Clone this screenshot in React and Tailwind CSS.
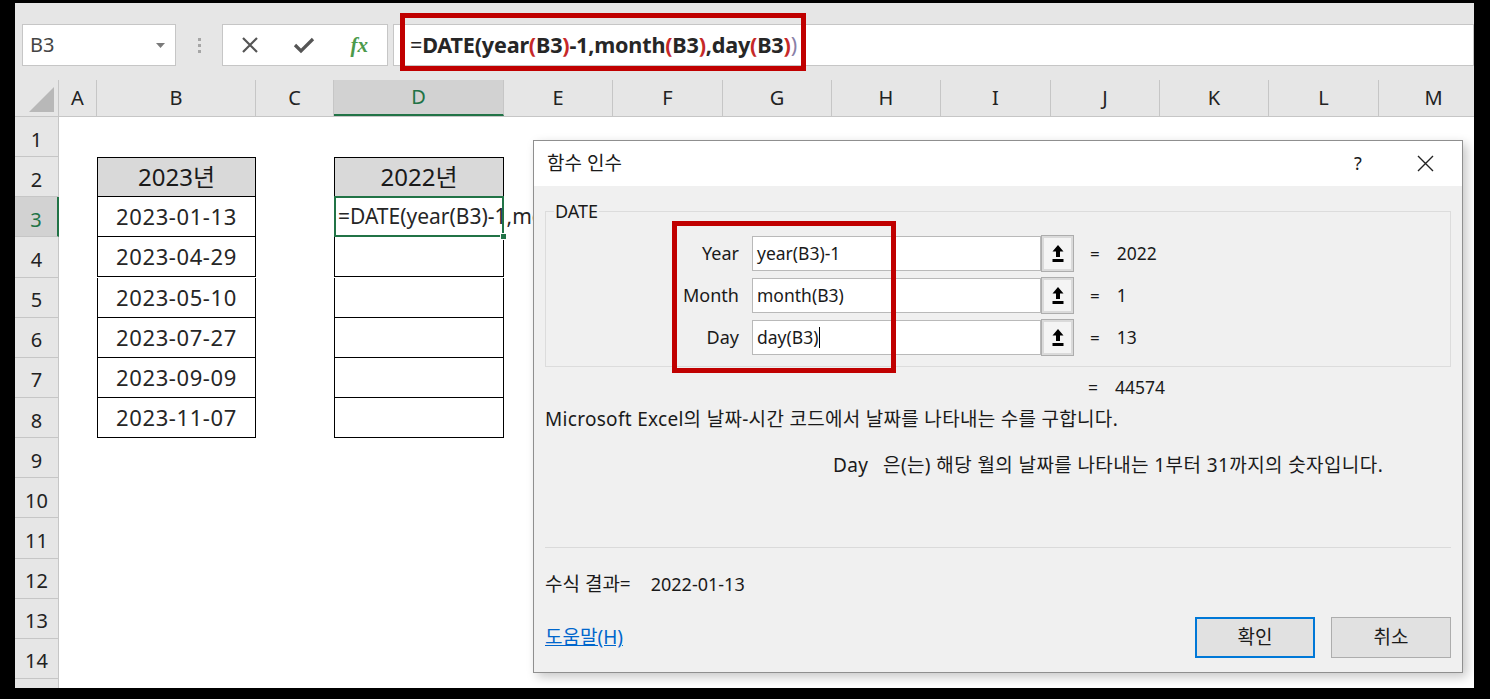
import React from "react";

const COLS = [
  { l: "A", w: "w-[38px]" },
  { l: "B", w: "w-[159px]" },
  { l: "C", w: "w-[78px]" },
  { l: "D", w: "w-[170px]" },
  { l: "E", w: "w-[109px]" },
  { l: "F", w: "w-[110px]" },
  { l: "G", w: "w-[109px]" },
  { l: "H", w: "w-[109px]" },
  { l: "I", w: "w-[110px]" },
  { l: "J", w: "w-[109px]" },
  { l: "K", w: "w-[109px]" },
  { l: "L", w: "w-[110px]" },
  { l: "M", w: "w-[110px]" },
];

const DATES = ["2023-01-13", "2023-04-29", "2023-05-10", "2023-07-27", "2023-09-09", "2023-11-07"];

function RefIcon() {
  return (
    <svg width="12" height="18" viewBox="0 0 12 18">
      <path d="M6 0 L11.5 6.5 H8 V12 H4 V6.5 H0.5 Z" fill="#000" />
      <rect x="0.5" y="14" width="11" height="3" fill="#000" />
    </svg>
  );
}

function Cell({ col, row }) {
  const base = `${col.w} h-[40px] shrink-0`;
  if (col.l === "B" && row >= 2 && row <= 8) {
    if (row === 2)
      return (
        <div className={`${base} border border-black bg-[#d9d9d9] flex items-center justify-center text-[24px] text-[#1a1a1a]`}>
          2023년
        </div>
      );
    return (
      <div className={`${base} border-x border-b border-black bg-white flex items-center justify-center text-[22px] tracking-[0.6px] text-[#262626]`}>
        {DATES[row - 3]}
      </div>
    );
  }
  if (col.l === "D" && row >= 2 && row <= 8) {
    if (row === 2)
      return (
        <div className={`${base} border border-black bg-[#d9d9d9] flex items-center justify-center text-[24px] text-[#1a1a1a]`}>
          2022년
        </div>
      );
    if (row === 3)
      return (
        <div className={`${base} relative border-x border-b border-black bg-white flex items-center pl-[3px] text-[21px] text-[#262626] whitespace-nowrap`}>
          <div className="w-[196px] shrink-0 overflow-hidden">=DATE(year(B3)-1,month(B3),day(B3))</div>
          <div className="absolute -left-[1px] -top-[1px] -right-[1px] -bottom-[1px] border-2 border-[#217346]" />
          <div className="absolute -right-[4px] -bottom-[4px] w-[7px] h-[7px] bg-[#217346] border border-white" />
        </div>
      );
    return <div className={`${base} border-x border-b border-black bg-white`} />;
  }
  return <div className={`${base} bg-white`} />;
}

export default function App() {
  const rows = Array.from({ length: 15 }, (_, i) => i + 1);
  return (
    <div className="relative w-[1490px] h-[699px] bg-black pt-[3px] pl-[15px] overflow-hidden font-['Noto_Sans','Noto_Sans_CJK_KR',sans-serif]">
      <div className="w-[1459px] h-[685px] bg-white flex flex-col overflow-hidden">
        {/* Toolbar / formula bar */}
        <div className="h-[77px] shrink-0 bg-[#e6e6e6] flex items-start pt-[21px] pl-[7px]">
          <div className="w-[154px] h-[42px] bg-white border border-[#c6c6c6] flex items-center justify-between pl-[7px] pr-[10px]">
            <span className="text-[20px] text-[#444]">B3</span>
            <svg width="9" height="5" viewBox="0 0 9 5">
              <path d="M0 0 H9 L4.5 5 Z" fill="#7a7a7a" />
            </svg>
          </div>
          <div className="w-[46px] h-[42px] flex flex-col items-center justify-center gap-[3px]">
            <div className="w-[3px] h-[3px] bg-[#a6a6a6]" />
            <div className="w-[3px] h-[3px] bg-[#a6a6a6]" />
            <div className="w-[3px] h-[3px] bg-[#a6a6a6]" />
          </div>
          <div className="w-[166px] h-[42px] bg-white border border-[#c6c6c6] flex items-center">
            <div className="w-[54px] flex justify-center">
              <svg width="18" height="18" viewBox="0 0 18 18">
                <path d="M2 2 L16 16 M16 2 L2 16" stroke="#555" strokeWidth="2.2" />
              </svg>
            </div>
            <div className="w-[56px] flex justify-center">
              <svg width="22" height="18" viewBox="0 0 22 18">
                <path d="M2 9 L8 15 L20 3" stroke="#555" strokeWidth="3.2" fill="none" />
              </svg>
            </div>
            <div className="w-[56px] flex justify-center">
              <span className="font-['Liberation_Serif',serif] italic font-bold text-[21px] text-[#4c9a4c] leading-none">fx</span>
            </div>
          </div>
          <div className="ml-[5px] flex-1 h-[42px] bg-white border border-[#c6c6c6] flex items-center pl-[16px]">
            <span className="text-[21.6px] font-bold text-[#262626] whitespace-nowrap tracking-[-0.2px]">
              <span className="font-normal">=</span>DATE(year<span className="text-[#c62828]">(</span>B3
              <span className="text-[#c62828]">)</span>-1,month<span className="text-[#c62828]">(</span>B3
              <span className="text-[#c62828]">)</span>,day<span className="text-[#c62828]">(</span>B3
              <span className="text-[#c62828]">)</span>
              <span className="text-[#8a7fa8] font-normal">)</span>
            </span>
          </div>
        </div>

        {/* Column headers */}
        <div className="h-[37px] shrink-0 flex bg-[#e6e6e6] border-b border-[#c6c6c6]">
          <div className="w-[44px] shrink-0 h-full border-r border-[#c6c6c6] flex items-end justify-end pr-[4px] pb-[4px]">
            <svg width="25" height="25" viewBox="0 0 25 25">
              <path d="M25 0 V25 H0 Z" fill="#b8b8b8" />
            </svg>
          </div>
          {COLS.map((c) =>
            c.l === "D" ? (
              <div key={c.l} className={`${c.w} shrink-0 h-full bg-[#d2d2d2] border-r border-[#c6c6c6] border-b-2 border-b-[#217346] flex items-center justify-center text-[20px] text-[#217346]`}>
                {c.l}
              </div>
            ) : (
              <div key={c.l} className={`${c.w} shrink-0 h-full border-r border-[#c6c6c6] flex items-center justify-center text-[20px] text-[#222]`}>
                {c.l}
              </div>
            )
          )}
        </div>

        {/* Rows */}
        <div className="flex flex-col">
          {rows.map((r) => (
            <div key={r} className="flex h-[40.15px] shrink-0">
              <div
                className={
                  r === 3
                    ? "w-[44px] shrink-0 h-full bg-[#d2d2d2] border-b border-[#c6c6c6] border-r-2 border-r-[#217346] flex items-center justify-center text-[20px] text-[#217346] pt-[6px]"
                    : "w-[44px] shrink-0 h-full bg-[#e6e6e6] border-b border-[#c6c6c6] border-r border-r-[#c6c6c6] flex items-center justify-center text-[20px] text-[#222] pt-[6px]"
                }
              >
                {r < 15 ? r : null}
              </div>
              {COLS.map((c) => (
                <Cell key={c.l} col={c} row={r} />
              ))}
            </div>
          ))}
        </div>
      </div>

      {/* Formula bar annotation */}
      <div className="absolute left-[400px] top-[13px] w-[406px] h-[58px] border-[5px] border-[#c00000]" />

      {/* Function Arguments dialog */}
      <div className="absolute left-[533px] top-[140px] w-[930px] h-[533px] border border-[#8f8f8f] bg-[#f0f0f0] flex flex-col shadow-[4px_4px_10px_rgba(0,0,0,0.22)] text-[#1a1a1a]">
        <div className="h-[45px] shrink-0 bg-white flex items-center pl-[13px]">
          <span className="text-[19px] flex-1">함수 인수</span>
          <span className="text-[18px] w-[20px] text-center mr-[49px]">?</span>
          <svg width="17" height="17" viewBox="0 0 17 17" className="mr-[28px]">
            <path d="M1 1 L16 16 M16 1 L1 16" stroke="#222" strokeWidth="1.4" />
          </svg>
        </div>
        <div className="flex-1 flex flex-col px-[11px]">
          <div className="relative mt-[25px] h-[156px] border border-[#dcdcdc] flex flex-col gap-[7px] pt-[24px]">
            <span className="absolute -top-[12px] left-[8px] px-[1px] bg-[#f0f0f0] text-[18px] leading-[22px]">DATE</span>
            {[
              ["Year", "year(B3)-1", "2022"],
              ["Month", "month(B3)", "1"],
              ["Day", "day(B3)", "13"],
            ].map(([lab, val, res], i) => (
              <div key={lab} className="flex items-center h-[35px]">
                <div className="w-[193px] text-right text-[18px]">{lab}</div>
                <div className="ml-[13px] w-[289px] h-full bg-white border border-[#b9b9b9] flex items-center pl-[4px] text-[17.5px]">
                  {val}
                  {i === 2 && <span className="inline-block w-[1px] h-[21px] bg-black ml-[1px]" />}
                </div>
                <div className="w-[33px] h-[37px] border border-[#adadad] bg-[#dadada] p-[2px] flex">
                  <div className="flex-1 bg-[#f4f4f4] flex items-center justify-center">
                    <RefIcon />
                  </div>
                </div>
                <span className="ml-[16px] text-[17px]">=</span>
                <span className="ml-[17px] text-[17.5px]">{res}</span>
              </div>
            ))}
          </div>
          <div className="mt-[9px] h-[22px] flex items-center text-[17.5px]">
            <span className="ml-[543px]">=</span>
            <span className="ml-[17px]">44574</span>
          </div>
          <div className="mt-[10px] h-[22px] flex items-center text-[19px] tracking-[0.3px] whitespace-nowrap">
            Microsoft Excel의 날짜-시간 코드에서 날짜를 나타내는 수를 구합니다.
          </div>
          <div className="mt-[24px] h-[22px] flex items-center text-[19px] tracking-[0.4px] whitespace-nowrap pl-[288px]">
            <span className="w-[50px]">Day</span>
            <span>은(는) 해당 월의 날짜를 나타내는 1부터 31까지의 숫자입니다.</span>
          </div>
          <div className="mt-[71px] h-px bg-[#dadada]" />
          <div className="mt-[25px] h-[22px] flex items-center text-[19px] whitespace-nowrap">
            <span>수식 결과=</span>
            <span className="ml-[20px] text-[18px]">2022-01-13</span>
          </div>
          <div className="mt-[22px] flex items-center">
            <span className="flex-1 text-[19px] text-[#0066cc] underline">도움말(H)</span>
            <div className="w-[120px] h-[41px] border-2 border-[#0078d7] bg-[#e1e1e1] flex items-center justify-center text-[19px]">확인</div>
            <div className="ml-[16px] w-[120px] h-[41px] border border-[#adadad] bg-[#e1e1e1] flex items-center justify-center text-[19px]">취소</div>
          </div>
        </div>
        {/* annotation box */}
        <div className="absolute left-[138px] top-[80px] w-[224px] h-[152px] border-[5px] border-[#c00000]" />
      </div>
    </div>
  );
}
